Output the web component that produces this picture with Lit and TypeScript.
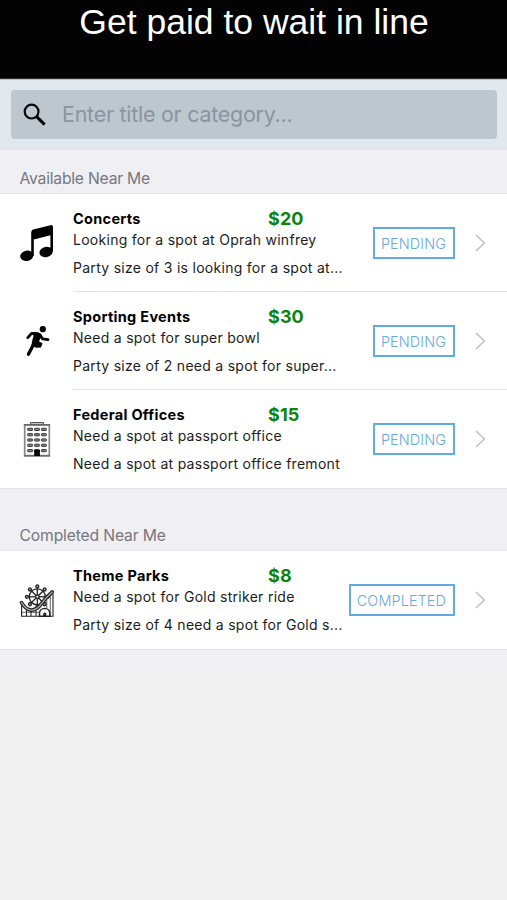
import { LitElement, html, css, svg, TemplateResult } from "lit";
import { customElement, property } from "lit/decorators.js";

interface Job {
  icon: string;
  title: string;
  price: string;
  summary: string;
  detail: string;
  status: string;
}

const available: Job[] = [
  { icon: "music", title: "Concerts", price: "$20", summary: "Looking for a spot at Oprah winfrey", detail: "Party size of 3 is looking for a spot at...", status: "PENDING" },
  { icon: "runner", title: "Sporting Events", price: "$30", summary: "Need a spot for super bowl", detail: "Party size of 2 need a spot for super...", status: "PENDING" },
  { icon: "office", title: "Federal Offices", price: "$15", summary: "Need a spot at passport office", detail: "Need a spot at passport office fremont", status: "PENDING" },
];

const completed: Job[] = [
  { icon: "park", title: "Theme Parks", price: "$8", summary: "Need a spot for Gold striker ride", detail: "Party size of 4 need a spot for Gold s...", status: "COMPLETED" },
];

const spokes = [0, 45, 90, 135, 180, 225, 270, 315];
const floors = [7.3, 12.6, 17.9, 23.2, 28.5];

const icons: Record<string, TemplateResult> = {
  music: svg`
    <path d="M11.2 7.2 Q11.4 5.2 13.2 4.6 L30.5 .2 Q33 -.3 33 2 V26.5 H30.4 V10.2 L13.8 14.6 V31 H11.2Z"/>
    <ellipse cx="6.8" cy="30.8" rx="6.6" ry="5.2" transform="rotate(-12 6.8 30.8)"/>
    <ellipse cx="26.1" cy="27" rx="6.7" ry="5.2" transform="rotate(-12 26.1 27)"/>`,
  runner: svg`
    <circle cx="22.8" cy="6.2" r="3.1"/>
    <path d="M10.5 9.2 L18.3 9.2 L21.8 12 L19 18.4 L22.6 20.2 L21 24.4 L16 24.8 L11.6 22.4 L12 18.5 L13.6 12.6Z"/>
    <g fill="none" stroke="#000" stroke-linecap="round" stroke-linejoin="round">
      <path stroke-width="2.8" d="M15.5 10.4 L11.3 10.6 L7.8 14.6"/>
      <path stroke-width="2.8" d="M19.8 11.6 L22.4 15.8 L28 16.6"/>
      <path stroke-width="3.3" d="M14 20.5 L11.7 25 L8.4 31.2"/>
    </g>`,
  office: svg`
    <path fill="#c4c4c4" stroke="#555" d="M10.4 4 V1.5 H23.6 V4"/>
    <rect x="4.7" y="4" width="24.6" height="30.6" fill="#fff" stroke="#888" stroke-width="1.7"/>
    <path fill="none" stroke="#444" stroke-width=".8" d="M3.8 3.8 H30.2 M3.8 35 H30.2"/>
    ${floors.map((y) => [7.6, 14.5, 21.4].map((x) => svg`<rect x=${x} y=${y} width="5" height="2.2" rx=".7" fill="#888" stroke="#333" stroke-width="1"/>`))}
    <rect x="14.2" y="29" width="5.7" height="6"/>`,
  park: svg`
    <g fill="none" stroke="#222" stroke-width="1.3">
      <circle cx="17.3" cy="14.8" r="8"/>
      ${spokes.map((a) => svg`<g transform="rotate(${a} 17.3 14.8)"><path d="M17.3 14.8 V6"/><circle cx="17.3" cy="4.4" r="1.5" fill="#aaa"/></g>`)}
      <circle cx="17.3" cy="14.8" r="1.7" fill="#fff"/>
      <path d="M1.6 22 V34.2 H33 V12 M6.5 27.5 V34 M11 30 V34 M16 29 V34" stroke-width="1.1"/>
      <path d="M26.8 18 V26 M30.3 14 V34" stroke-width=".7"/>
      <path d="M1.8 30.3 H20" stroke-width=".7"/>
      <path d="M1.5 20.6 C6.5 28.8 13.5 30.6 19.5 24 C25 17.2 25.5 16 32.3 10" stroke-width="3.7" stroke-linecap="round"/>
      <path d="M1.5 20.6 C6.5 28.8 13.5 30.6 19.5 24 C25 17.2 25.5 16 32.3 10" stroke="#aaa" stroke-width="1.3" stroke-linecap="round"/>
      <path d="M19.5 34.2 V31 Q20 26.6 24.7 26.4 Q29.2 26.6 29.8 31 V34.2Z" fill="#fff" stroke-width="1.4"/>
      <path d="M23.2 34 V31.5 Q24.7 29.6 26.2 31.5 V34Z" fill="#222" stroke="none"/>
    </g>`,
};

@customElement("job-row")
class JobRow extends LitElement {
  @property({ attribute: false }) job!: Job;

  static styles = css`
    :host { display: flex; height: 98px; background: #fff; box-sizing: border-box; padding-left: 20px; }
    .icon { width: 34px; height: 36px; margin: 31px 19px 0 0; flex: none; overflow: visible; }
    .body { flex: 1; min-width: 0; display: flex; align-items: center; border-bottom: 1px solid #e4e4e8; box-sizing: border-box; }
    :host([last]) .body { border-bottom-color: transparent; }
    .text { width: 272px; flex: none; align-self: flex-start; padding-top: 13px; white-space: nowrap; color: #1c1c1c; font-size: 14px; letter-spacing: 0.28px; }
    .head { display: flex; height: 23px; line-height: 23px; }
    .title { width: 195px; font-size: 14.5px; font-weight: 700; color: #000; letter-spacing: 0.3px; }
    .price { font-size: 18px; font-weight: 700; color: #0b850b; line-height: 23px; letter-spacing: 0.1px; }
    .summary { height: 20px; line-height: 20px; }
    .detail { margin-top: 7px; height: 22px; line-height: 22px; }
    .action { flex: 1; display: flex; justify-content: flex-end; align-items: center; margin-left: -20px; padding-right: 21px; }
    .status { border: 2px solid #62abdf; height: 32px; line-height: 29px; box-sizing: border-box; padding: 0 7px 0 6px; color: #66aae0; font-size: 14.4px; font-weight: 300; letter-spacing: 0.12px; }
    .chevron { width: 12px; height: 18px; margin-left: 19px; flex: none; }
  `;

  render() {
    const j = this.job;
    return html`
      <svg class="icon" viewBox="0 0 34 36">${icons[j.icon]}</svg>
      <div class="body">
        <div class="text">
          <div class="head"><span class="title">${j.title}</span><span class="price">${j.price}</span></div>
          <div class="summary">${j.summary}</div>
          <div class="detail">${j.detail}</div>
        </div>
        <div class="action">
          <span class="status">${j.status}</span>
          <svg class="chevron" viewBox="0 0 12 18"><path d="M2 1 L10.3 9 L2 17" fill="none" stroke="#c2c2c6" stroke-width="1.6"/></svg>
        </div>
      </div>`;
  }
}

@customElement("app-root")
class AppRoot extends LitElement {
  static styles = css`
    :host { display: block; height: 900px; overflow: hidden; background: #f0f0f0; font-family: Inter, "Noto Sans", sans-serif; }
    .banner { height: 79px; padding: 1px 0 0 1px; background: #030303; color: #fff; font: 35.5px/43px "Liberation Sans", Arial, sans-serif; text-align: center; box-sizing: border-box; border-bottom: 1px solid #333; }
    .search { height: 71px; padding: 10px 10px 11px 11px; box-sizing: border-box; background: #e1e8ee; border-top: 1px solid #b9bdc1; border-bottom: 1px solid #e0e5eb; }
    .field { height: 49px; border-radius: 4px; background: #bdc7cf; display: flex; align-items: center; color: #8995a0; font-size: 21.5px; letter-spacing: -0.27px; }
    .hint { padding-bottom: 2px; }
    .glass { width: 24px; height: 24px; margin: 0 15px 0 12px; }
    .heading { background: #efeff4; color: #77777c; font-size: 15.7px; letter-spacing: -0.22px; line-height: 20px; padding: 19px 0 4px 19.5px; border-bottom: 1px solid #e5e5ea; }
    .heading.later { padding-top: 37px; border-top: 1px solid #e2e2e7; letter-spacing: -0.15px; }
    .foot { height: 19px; background: #efeff4; border-top: 1px solid #e2e2e7; }
  `;

  render() {
    const rows = (jobs: Job[]) => jobs.map((j, i) => html`<job-row .job=${j} ?last=${i === jobs.length - 1}></job-row>`);
    return html`
      <div class="banner">Get paid to wait in line</div>
      <div class="search">
        <div class="field">
          <svg class="glass" viewBox="0 0 24 24"><g fill="none" stroke="#080808"><circle cx="8.6" cy="8.6" r="6.9" stroke-width="2.2"/><path d="M13.6 13.6 L21.6 21.6" stroke-width="3"/></g></svg>
          <span class="hint">Enter title or category...</span>
        </div>
      </div>
      <div class="heading">Available Near Me</div>
      ${rows(available)}
      <div class="heading later">Completed Near Me</div>
      ${rows(completed)}
      <div class="foot"></div>`;
  }
}
